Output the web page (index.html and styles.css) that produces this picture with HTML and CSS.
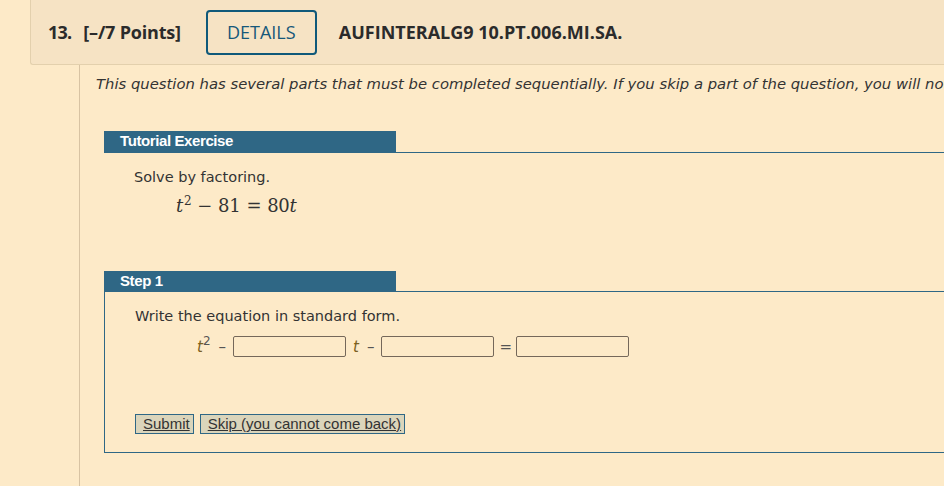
FILE: index.html
```html
<!DOCTYPE html>
<html lang="en">
<head>
  <meta charset="UTF-8">
  <title>Question 13</title>
  <link rel="stylesheet" href="styles.css">
</head>
<body>
  <div class="question">
    <div class="question-head">
      <span class="num">13.</span>
      <span class="points">[&ndash;/7 Points]</span>
      <button class="details">DETAILS</button>
      <span class="code">AUFINTERALG9 10.PT.006.MI.SA.</span>
    </div>
    <div class="question-body">
      <p class="note">This question has several parts that must be completed sequentially. If you skip a part of the question, you will not receive any points for the skipped part.</p>

      <div class="tutorial">
        <div class="bar-row">
          <div class="bar">Tutorial Exercise</div>
        </div>
        <div class="tutorial-content">
          <p class="prompt">Solve by factoring.</p>
          <div class="math"><i>t</i><sup>2</sup><span class="mop">&minus;</span>81<span class="mop">=</span>80<i>t</i></div>
        </div>
      </div>

      <div class="step">
        <div class="bar-row">
          <div class="bar">Step 1</div>
        </div>
        <div class="step-box">
          <p class="prompt">Write the equation in standard form.</p>
          <div class="answer-row">
            <span class="var"><i>t</i><sup>2</sup></span>
            <span class="op">&ndash;</span>
            <input type="text" class="blank">
            <span class="var"><i>t</i></span>
            <span class="op">&ndash;</span>
            <input type="text" class="blank">
            <span class="op eq">=</span>
            <input type="text" class="blank">
          </div>
          <div class="actions">
            <button class="act">Submit</button>
            <button class="act">Skip (you cannot come back)</button>
          </div>
        </div>
      </div>
    </div>
  </div>
</body>
</html>
```

FILE: styles.css
```css
body {
  margin: 0;
  background-color: #fdeac8;
  color: #333;
  overflow: hidden;
}

.question {
  margin-left: 30px;
}

.question-head {
  display: flex;
  align-items: center;
  height: 65px;
  padding-left: 17px;
  background-color: #f6e3c4;
  border: 1px solid #e3d0ad;
  border-top: none;
  border-right: none;
  border-bottom-left-radius: 3px;
  font-family: "Open Sans", sans-serif;
  font-weight: 700;
  font-size: 18px;
  color: #2b2b2b;
  box-sizing: border-box;
  white-space: nowrap;
}

.num {
  margin-right: 12px;
  letter-spacing: -0.8px;
}

.points {
  letter-spacing: -0.2px;
}

.details {
  margin-left: 25px;
  margin-right: 22px;
  width: 111px;
  height: 45px;
  flex-shrink: 0;
  background: transparent;
  border: 2px solid #10597a;
  border-radius: 4px;
  font-family: "Open Sans", sans-serif;
  font-size: 18px;
  font-weight: 500;
  color: #16587a;
}

.question-body {
  margin-left: 49px;
  border-left: 1px solid #d8c3a3;
  padding-left: 24px;
  padding-top: 8px;
  min-height: 480px;
  font-family: "DejaVu Sans", Verdana, sans-serif;
}

.note {
  margin: 0;
  font-style: italic;
  font-size: 14.8px;
  white-space: nowrap;
  color: #333;
  line-height: 21px;
  margin-left: -8px;
}

.tutorial {
  margin-top: 37px;
}

.bar-row {
  display: flex;
  border-bottom: 1px solid #2f6785;
}

.bar {
  width: 276px;
  height: 21px;
  padding-left: 16px;
  background-color: #2f6785;
  color: #fff;
  font-family: "Liberation Sans", Arial, sans-serif;
  font-weight: 700;
  font-size: 15px;
  line-height: 20px;
  letter-spacing: -0.4px;
}

.tutorial-content {
  padding-left: 30px;
  padding-top: 14px;
}

.prompt {
  margin: 0;
  font-size: 14.5px;
  line-height: 20px;
  color: #333;
}

.math {
  margin-top: 8px;
  margin-left: 42px;
  font-family: "DejaVu Serif", "Liberation Serif", serif;
  font-size: 18px;
  color: #333;
  letter-spacing: -0.3px;
}

.mop {
  padding: 0 6px;
}

.math sup,
.var sup {
  font-size: 12px;
  vertical-align: 7px;
  line-height: 0;
}

.math i {
  margin-right: 1px;
}

.step {
  margin-top: 55px;
}

.step .bar-row {
  border-bottom: none;
}

.step .bar {
  height: 20px;
}

.step-box {
  border: 1px solid #2f6785;
  border-right: none;
  padding: 14px 0 18px 30px;
  height: 128px;
  box-sizing: content-box;
}

.answer-row {
  display: flex;
  align-items: center;
  margin-top: 10px;
  margin-left: 62px;
  font-size: 15px;
  color: #555;
}

.var {
  font-style: italic;
}

.var i {
  color: #7a6020;
}

.var sup {
  color: #555;
  font-style: normal;
}

.op {
  margin: 0 7px 0 8px;
}

.eq {
  margin: 0 4px 0 5px;
}

.blank {
  width: 113px;
  height: 21px;
  box-sizing: border-box;
  border: 1px solid #75685a;
  border-radius: 2px;
  background: transparent;
  margin: 0;
  padding: 0;
}

.blank + .var {
  margin-left: 7px;
}

.actions {
  display: flex;
  gap: 6px;
  margin-top: 57px;
}

.act {
  height: 20px;
  padding: 0 3px 0 7px;
  background-color: #dbd5bb;
  border: 1px solid #2f6785;
  font-family: "Liberation Sans", Arial, sans-serif;
  font-size: 15px;
  color: #333;
  text-decoration: underline;
  line-height: 16px;
}
```
